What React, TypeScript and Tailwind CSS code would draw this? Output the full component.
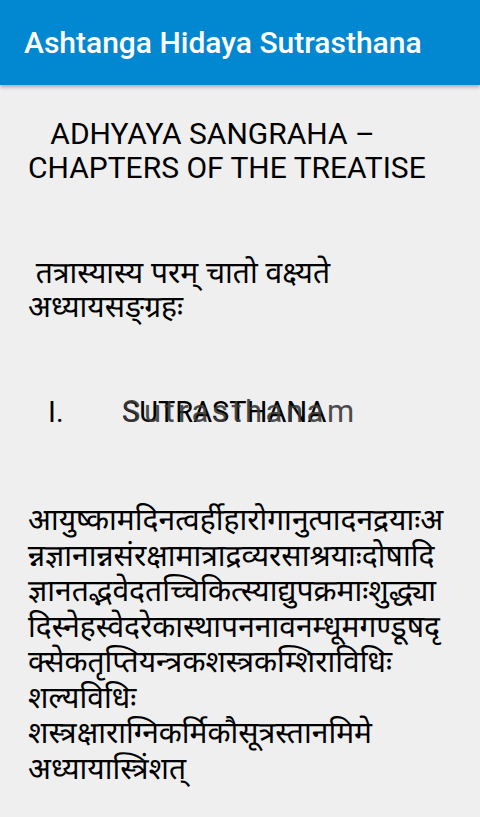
import React from "react";

const deva = {
  fontFamily: '"Noto Sans Devanagari", "Lohit Devanagari", "Noto Sans", sans-serif',
};

export default function App() {
  const lines = [
    "आयुष्कामदिनत्वर्हीहारोगानुत्पादनद्रयाःअ",
    "न्नज्ञानान्नसंरक्षामात्राद्रव्यरसाश्रयाःदोषादि",
    "ज्ञानतद्भवेदतच्चिकित्स्याद्युपक्रमाःशुद्ध्या",
    "दिस्नेहस्वेदरेकास्थापननावनम्धूमगण्डूषदृ",
    "क्सेकतृप्तियन्त्रकशस्त्रकम्शिराविधिः",
    "शल्यविधिः",
    "शस्त्रक्षाराग्निकर्मिकौसूत्रस्तानमिमे",
    "अध्यायास्त्रिंशत्",
  ];
  return (
    <div className="w-[480px] h-[817px] bg-[#efefef] overflow-hidden" style={{ fontFamily: "Roboto, sans-serif" }}>
      <div className="h-[85px] bg-[#0288d1] flex items-center px-6 shadow-[0_2px_4px_rgba(0,0,0,0.3)] relative z-10">
        <h1 className="text-white text-[30px] font-medium leading-none whitespace-nowrap">Ashtanga Hidaya Sutrasthana</h1>
      </div>
      <div className="px-7 pt-[32px] text-black">
        <div className="text-[30px] leading-[34px] whitespace-pre">{"   ADHYAYA SANGRAHA –\nCHAPTERS OF THE TREATISE"}</div>
        <div className="mt-[74px] text-[30px] leading-[34px] whitespace-pre" style={deva}>
          {" तत्रास्यास्य परम् चातो वक्ष्यते\nअध्यायसङ्ग्रहः"}
        </div>
        <div className="mt-[67px] flex items-baseline text-[29px] leading-[35px]">
          <span className="ml-[20px] w-[74px]">I.</span>
          <span className="grid items-baseline whitespace-nowrap">
            <span className="col-start-1 row-start-1">SUTRASTHANA</span>
            <span className="col-start-1 row-start-1 text-[#3a3a3a] text-[31px] tracking-[3.5px] opacity-90">Sutrasthanam</span>
          </span>
        </div>
        <div className="mt-[75px] text-[30px] leading-[35.5px]" style={deva}>
          {lines.map((l, i) => (
            <div key={i} className="whitespace-nowrap">{l}</div>
          ))}
        </div>
      </div>
    </div>
  );
}
